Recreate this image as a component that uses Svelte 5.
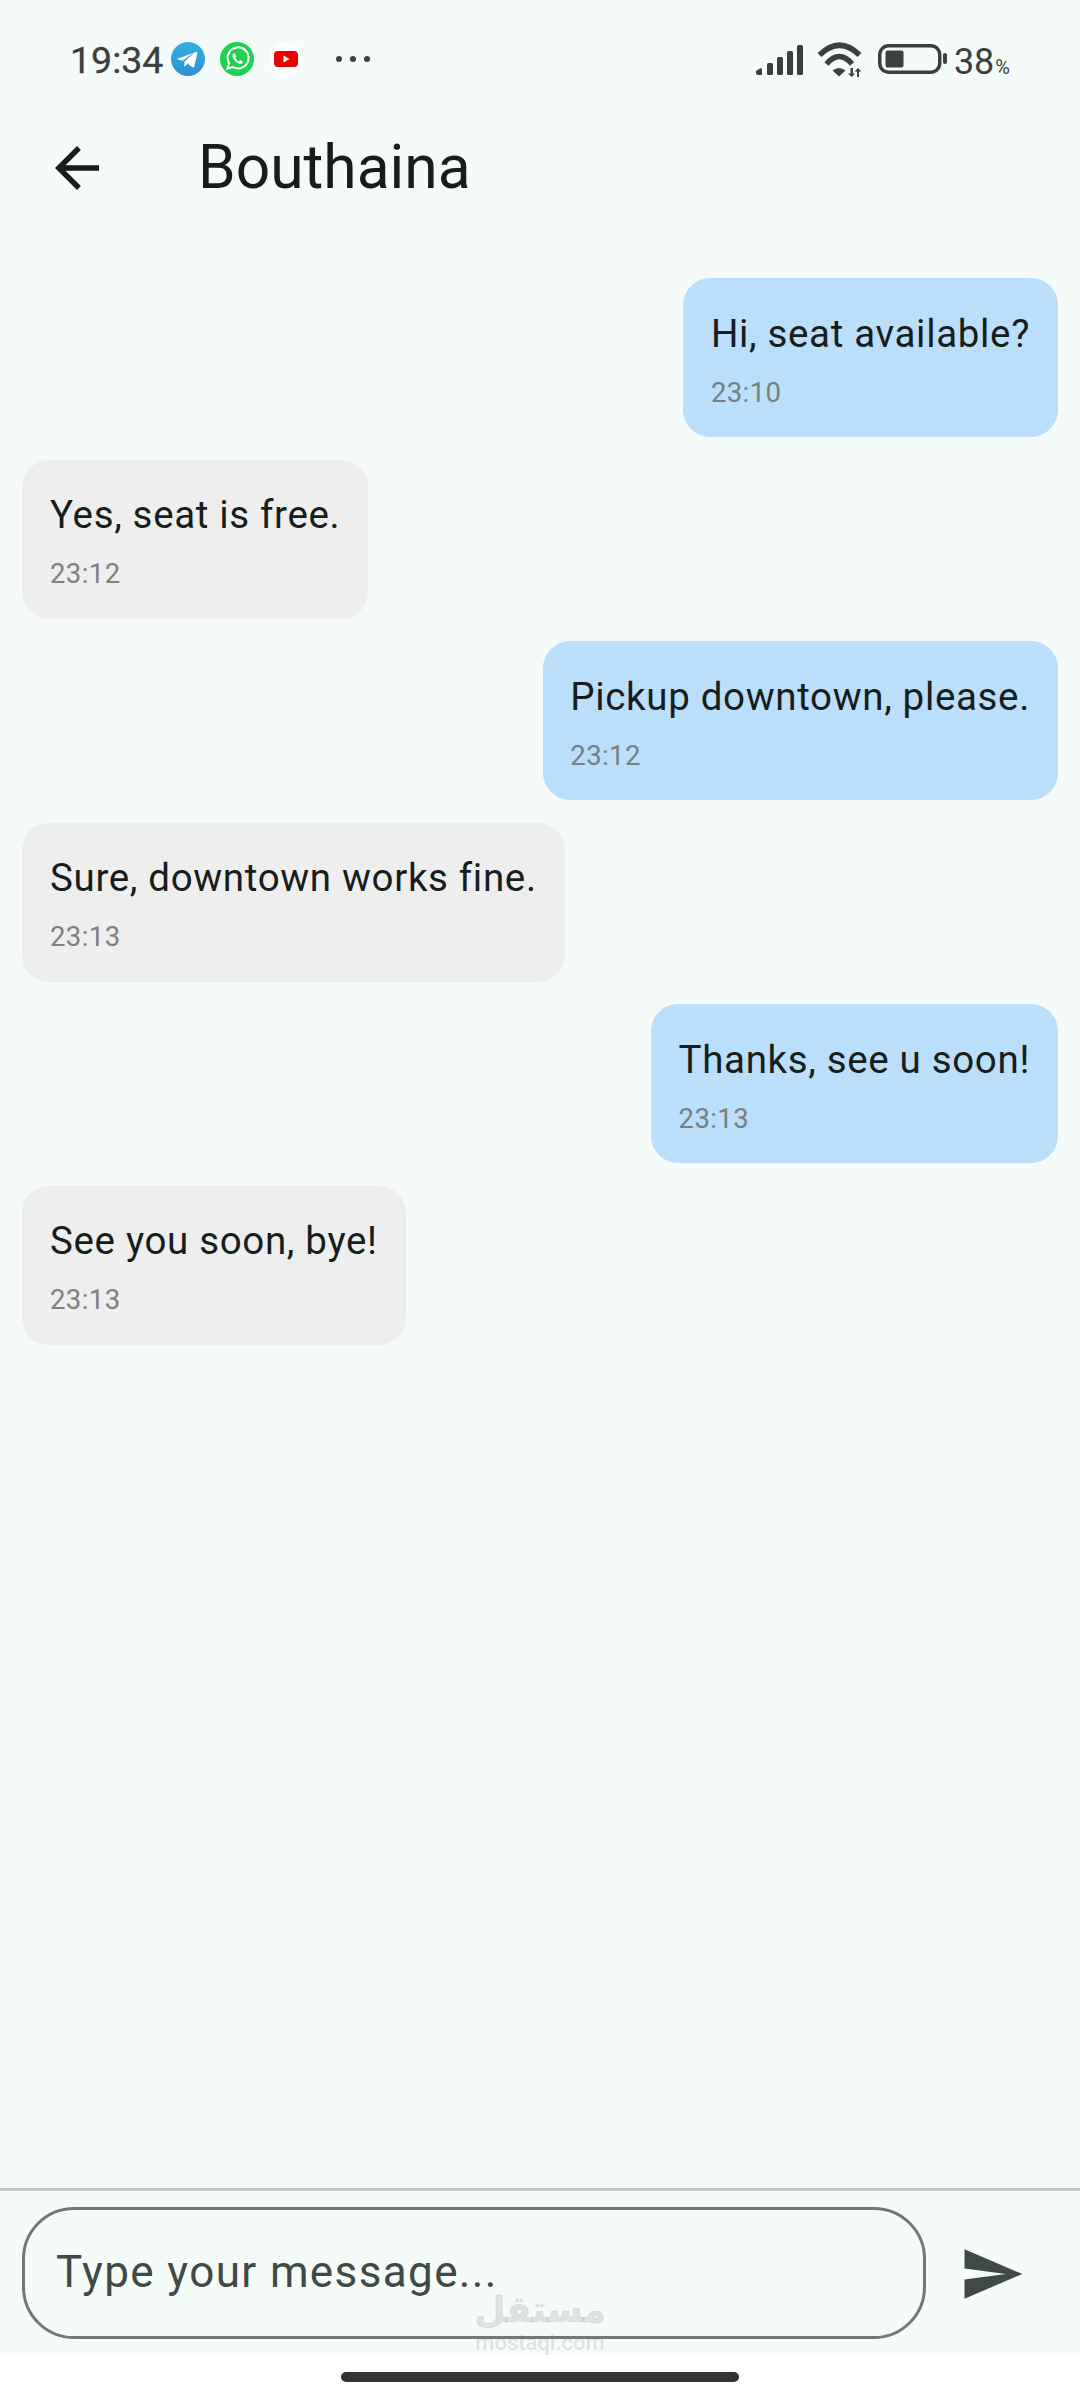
<script>
  const messages = [
    { text: 'Hi, seat available?', time: '23:10', mine: true },
    { text: 'Yes, seat is free.', time: '23:12', mine: false },
    { text: 'Pickup downtown, please.', time: '23:12', mine: true },
    { text: 'Sure, downtown works fine.', time: '23:13', mine: false },
    { text: 'Thanks, see u soon!', time: '23:13', mine: true },
    { text: 'See you soon, bye!', time: '23:13', mine: false }
  ];
</script>

<div class="screen">
  <div class="status">
    <span class="clock">19:34</span>
    <svg class="notif first" viewBox="0 0 34 34">
      <defs><linearGradient id="tg" x1="0" y1="0" x2="0" y2="1"><stop offset="0" stop-color="#37aee2"/><stop offset="1" stop-color="#2d92cf"/></linearGradient></defs>
      <circle cx="17" cy="17" r="17" fill="url(#tg)"/>
      <path d="M7 16.500 25 10c.9-.3 1.500.2 1.300 1.200l-3 13.300c-.2 1-.9 1.200-1.700.7l-5-3.500-2.400 2.300c-.3.3-.5.400-1 .4l.4-5 8.500-7.600c.4-.4-.1-.6-.6-.2L11.500 18.700 7 17.400c-.8-.3-.8-.7 0-.9z" fill="#fff"/>
    </svg>
    <svg class="notif" viewBox="0 0 34 34">
      <circle cx="17" cy="17" r="17" fill="#1fd14f"/>
      <path d="M7.500 26.500 9 21a10.500 10.500 0 1 1 4 4z" fill="none" stroke="#fff" stroke-width="2"/>
      <path d="M13.500 11.500c-1.500 1-1.500 3 .5 6s5 4.500 6.800 4.200c1.300-.2 2.200-1.300 2-2.300l-2.600-1.300-1.200 1.300c-1.400-.5-3-2-3.700-3.600l1-1.200-1.200-2.800c-.6-.3-1.200-.4-1.600-.3z" fill="#fff"/>
    </svg>
    <svg class="notif" viewBox="0 0 34 34">
      <circle cx="17" cy="17" r="17" fill="#fff"/>
      <rect x="5" y="9" width="24" height="16" rx="4" fill="#ee0000"/>
      <path d="M14.500 13.500v7l6-3.500z" fill="#fff"/>
    </svg>
    <span class="dots"><i></i><i></i><i></i></span>
    <span class="spacer"></span>
    <svg class="signal" viewBox="0 0 47 31">
      <path d="M0 27 4 24.500a1.200 1.200 0 0 1 2 1V31H2a2 2 0 0 1-2-2z" fill="#3c3f3e"/>
      <rect x="11" y="19" width="6" height="12" rx="1.500" fill="#3c3f3e"/>
      <rect x="21" y="13" width="6" height="18" rx="1.500" fill="#3c3f3e"/>
      <rect x="31" y="7" width="6" height="24" rx="1.500" fill="#3c3f3e"/>
      <rect x="41" y="1" width="6" height="30" rx="1.500" fill="#3c3f3e"/>
    </svg>
    <svg class="wifi" viewBox="0 0 47 35">
      <g fill="none" stroke="#3c3f3e" stroke-width="5.500">
        <path d="M2.500 13Q22.500-6.500 42.500 13"/>
        <path d="M9.500 22Q22.500 7 35 22"/>
      </g>
      <path d="M15.500 28.500Q22 23.500 28.500 28.500L22 34.500z" fill="#3c3f3e"/>
      <path d="M33.500 26v5.500H31l3.800 3.500 3.200-3.500h-2V26zM40 35v-5.500h-2.500l3.500-3.500 3.500 3.500H42V35z" fill="#3c3f3e"/>
    </svg>
    <svg class="battery" viewBox="0 0 70 30">
      <rect x="1.750" y="1.750" width="60" height="26.500" rx="9" fill="none" stroke="#3c3f3e" stroke-width="3.500"/>
      <rect x="7.500" y="6.500" width="18" height="17" rx="2" fill="#3c3f3e"/>
      <rect x="65" y="9" width="4" height="11" rx="2" fill="#3c3f3e"/>
    </svg>
    <span class="level">38<small>%</small></span>
  </div>

  <header class="appbar">
    <svg class="back" viewBox="0 0 24 24"><path d="M20 11H7.830l5.590-5.590L12 4l-8 8 8 8 1.410-1.410L7.830 13H20v-2z"/></svg>
    <h1>Bouthaina</h1>
  </header>

  <main class="list">
    {#each messages as m}
      <div class="bubble" class:mine={m.mine}>
        <p>{m.text}</p>
        <time>{m.time}</time>
      </div>
    {/each}
  </main>

  <footer class="composer">
    <div class="field">Type your message...</div>
    <svg class="send" viewBox="0 0 24 24"><path d="M2.010 21 23 12 2.010 3 2 10l15 2-15 2z"/></svg>
    <div class="mark" aria-hidden="true">
      <span class="ar">مستقل</span>
      <span class="en">mostaql.com</span>
    </div>
  </footer>

  <div class="nav"><span></span></div>
</div>

<style>
  :global(body) { margin: 0; background: #fff; }
  .screen {
    width: 1080px;
    height: 2400px;
    display: flex;
    flex-direction: column;
    background: #f5fbf9;
    font-family: Roboto, "Noto Sans", sans-serif;
    overflow: hidden;
  }
  .status {
    height: 91px;
    box-sizing: border-box;
    padding: 27px 70px 0 70px;
    display: flex;
    align-items: flex-start;
    color: #3c3f3e;
  }
  .clock { font-size: 37.500px; line-height: 64px; margin-top: 1px; letter-spacing: 0; width: 101px; height: 64px; -webkit-text-stroke: 0.3px #3c3f3e; }
  .notif { width: 34px; height: 34px; margin: 15px 15px 0 0; flex: none; }
  .dots { display: flex; gap: 8px; margin: 29px 0 0 18px; }
  .dots i { width: 6px; height: 6px; border-radius: 50%; background: #3c3f3e; }
  .spacer { flex: 1; }
  .signal { width: 47px; height: 31px; margin-top: 17px; flex: none; }
  .wifi { width: 47px; height: 35px; margin: 15px 0 0 14px; flex: none; }
  .battery { width: 70px; height: 30px; margin: 17px 0 0 14px; flex: none; }
  .level { font-size: 36px; line-height: 64px; margin: 3px 0 0 6px; letter-spacing: 0; }
  .level small { font-size: 20px; margin-left: 1px; }

  .appbar { height: 154px; display: flex; align-items: center; flex: none; }
  .back { width: 66px; height: 66px; margin-left: 44px; fill: #171d1b; flex: none; }
  h1 { margin: 0 0 0 88px; font-size: 60.500px; font-weight: 400; color: #171d1b; line-height: 1; }

  .list {
    flex: 1;
    padding: 33px 22px 0;
    display: flex;
    flex-direction: column;
    align-items: flex-start;
    gap: 22.600px;
  }
  .bubble {
    box-sizing: border-box;
    height: 159px;
    padding: 30px 28px 0;
    background: #eeeeee;
    border-radius: 27px;
  }
  .bubble.mine { align-self: flex-end; background: #bbdefb; padding-top: 31px; padding-left: 27.500px; }
  .bubble p {
    margin: 0;
    font-size: 38.500px;
    line-height: 50px;
    letter-spacing: 0.660px;
    color: #171d1b;
    white-space: nowrap;
  }
  .bubble time {
    display: block;
    margin-top: 16px;
    font-size: 27.500px;
    line-height: 36px;
    letter-spacing: 0.400px;
    color: #78807f;
  }
  .bubble:not(.mine) time { color: #808080; }

  .composer {
    position: relative;
    height: 167px;
    box-sizing: border-box;
    border-top: 3px solid #bfcbc6;
    padding: 16px 22px 0;
    display: flex;
    align-items: flex-start;
    flex: none;
  }
  .field {
    box-sizing: border-box;
    width: 904px;
    flex: none;
    height: 132px;
    border: 3px solid #707975;
    border-radius: 52px;
    padding: 0 31px;
    font-size: 44px;
    line-height: 124px;
    letter-spacing: 1.375px;
    color: #3f4945;
  }
  .send { width: 66px; height: 66px; margin: 34px 0 0 33px; fill: #3f4945; flex: none; }
  .mark {
    position: absolute;
    left: 473px;
    top: 97px;
    width: 134px;
    display: flex;
    flex-direction: column;
    align-items: center;
    color: rgba(120, 125, 125, 0.2);
    pointer-events: none;
  }
  .mark .ar { font-family: "DejaVu Sans", sans-serif; font-weight: 700; font-size: 36px; line-height: 44px; -webkit-text-stroke: 1px rgba(120, 125, 125, 0.12); }
  .mark .en { font-size: 22px; line-height: 20px; margin-top: 1px; font-weight: 500; }

  .nav { height: 45px; background: #fff; flex: none; display: flex; justify-content: center; padding-top: 17px; box-sizing: border-box; }
  .nav span { width: 398px; height: 10px; border-radius: 5px; background: #333; }
</style>
